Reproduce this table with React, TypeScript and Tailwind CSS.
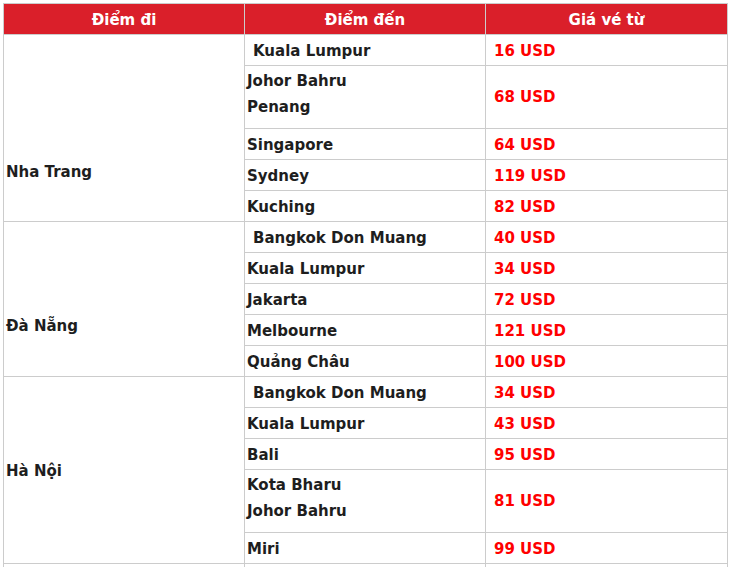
import React from "react";

type Row = { to: string[]; price: string; indent?: boolean };
type Group = { from: string; pad: string; rows: Row[] };

const groups: Group[] = [
  {
    from: "Nha Trang",
    pad: "pt-[127px]",
    rows: [
      { to: ["Kuala Lumpur"], price: "16 USD", indent: true },
      { to: ["Johor Bahru", "Penang"], price: "68 USD" },
      { to: ["Singapore"], price: "64 USD" },
      { to: ["Sydney"], price: "119 USD" },
      { to: ["Kuching"], price: "82 USD" },
    ],
  },
  {
    from: "Đà Nẵng",
    pad: "pt-[94px]",
    rows: [
      { to: ["Bangkok Don Muang"], price: "40 USD", indent: true },
      { to: ["Kuala Lumpur"], price: "34 USD" },
      { to: ["Jakarta"], price: "72 USD" },
      { to: ["Melbourne"], price: "121 USD" },
      { to: ["Quảng Châu"], price: "100 USD" },
    ],
  },
  {
    from: "Hà Nội",
    pad: "pt-[84px]",
    rows: [
      { to: ["Bangkok Don Muang"], price: "34 USD", indent: true },
      { to: ["Kuala Lumpur"], price: "43 USD" },
      { to: ["Bali"], price: "95 USD" },
      { to: ["Kota Bharu", "Johor Bahru"], price: "81 USD" },
      { to: ["Miri"], price: "99 USD" },
    ],
  },
];

const cell = "border border-[#cccccc]";

export default function App() {
  return (
    <div className="h-[567px] w-[731px] overflow-hidden bg-white pl-[3px] pt-[3px] font-['DejaVu_Sans',sans-serif] text-[15px] font-bold text-[#1e1e1e]">
      <table className="w-[724px] table-fixed border-collapse">
        <colgroup>
          <col className="w-[241px]" />
          <col className="w-[241px]" />
          <col className="w-[242px]" />
        </colgroup>
        <thead>
          <tr className="h-[31px] bg-[#da1f2a] text-white">
            <th className={`${cell} pt-[2px]`}>Điểm đi</th>
            <th className={`${cell} pt-[2px]`}>Điểm đến</th>
            <th className={`${cell} pt-[2px]`}>Giá vé từ</th>
          </tr>
        </thead>
        <tbody>
          {groups.map((g) =>
            g.rows.map((r, i) => {
              const double = r.to.length > 1;
              return (
                <tr key={g.from + i} className={double ? "h-[63px]" : "h-[31px]"}>
                  {i === 0 && (
                    <td rowSpan={g.rows.length} className={`${cell} ${g.pad} px-[2px] align-top leading-[20px]`}>
                      {g.from}
                    </td>
                  )}
                  <td
                    className={`${cell} px-[2px] leading-[26px] ${r.indent ? "pl-[8px]" : ""} ${
                      double ? "pb-[6px]" : "pt-[2px]"
                    }`}
                  >
                    {r.to.map((t) => (
                      <div key={t}>{t}</div>
                    ))}
                  </td>
                  <td className={`${cell} pl-[8px] text-[#ff0000] ${double ? "" : "pt-[2px]"}`}>{r.price}</td>
                </tr>
              );
            })
          )}
          <tr className="h-[31px]">
            <td className={cell}></td>
            <td className={cell}></td>
            <td className={cell}></td>
          </tr>
        </tbody>
      </table>
    </div>
  );
}
